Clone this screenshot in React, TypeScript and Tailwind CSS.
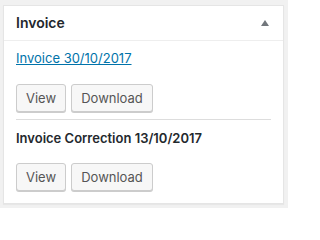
import React from "react";

function Btn({ children, w }: { children: React.ReactNode; w: string }) {
  return (
    <button
      className={`h-[28px] ${w} rounded-[3px] border border-[#cccccc] bg-[#f7f7f7] text-[13px] leading-[26px] text-[#555555] shadow-[0_1px_0_#cccccc] flex items-center justify-center`}
    >
      {children}
    </button>
  );
}

export default function App() {
  return (
    <div
      className="w-[288px] h-[208px] bg-[#f1f1f1] pt-[5px] pl-[3px] pr-[4px] pb-[4px]"
      style={{ fontFamily: "Inter, 'Open Sans', sans-serif" }}
    >
      <div className="h-full bg-white border border-[#e5e5e5] shadow-[0_1px_1px_rgba(0,0,0,0.04)] flex flex-col">
        <div className="h-[35px] border-b border-[#eeeeee] px-[12px] flex items-center justify-between">
          <h2 className="text-[14px] font-semibold text-[#23282d] leading-[20px]">Invoice</h2>
          <svg width="8" height="6" viewBox="0 0 8 6" className="mr-[2px]">
            <polygon points="4,0 8,6 0,6" fill="#72777c" />
          </svg>
        </div>
        <div className="px-[12px] pt-[8px] flex flex-col">
          <a
            href="#"
            className="text-[13px] leading-[18px] text-[#0073aa] underline self-start"
          >
            Invoice 30/10/2017
          </a>
          <div className="flex gap-[5px] mt-[17px]">
            <Btn w="w-[50px]">View</Btn>
            <Btn w="w-[82px]">Download</Btn>
          </div>
          <div className="h-px bg-[#dddddd] mt-[7px]" />
          <div className="mt-[9px] text-[13px] leading-[18px] font-semibold text-[#23282d]">
            Invoice Correction 13/10/2017
          </div>
          <div className="flex gap-[5px] mt-[16px]">
            <Btn w="w-[50px]">View</Btn>
            <Btn w="w-[82px]">Download</Btn>
          </div>
        </div>
      </div>
    </div>
  );
}
